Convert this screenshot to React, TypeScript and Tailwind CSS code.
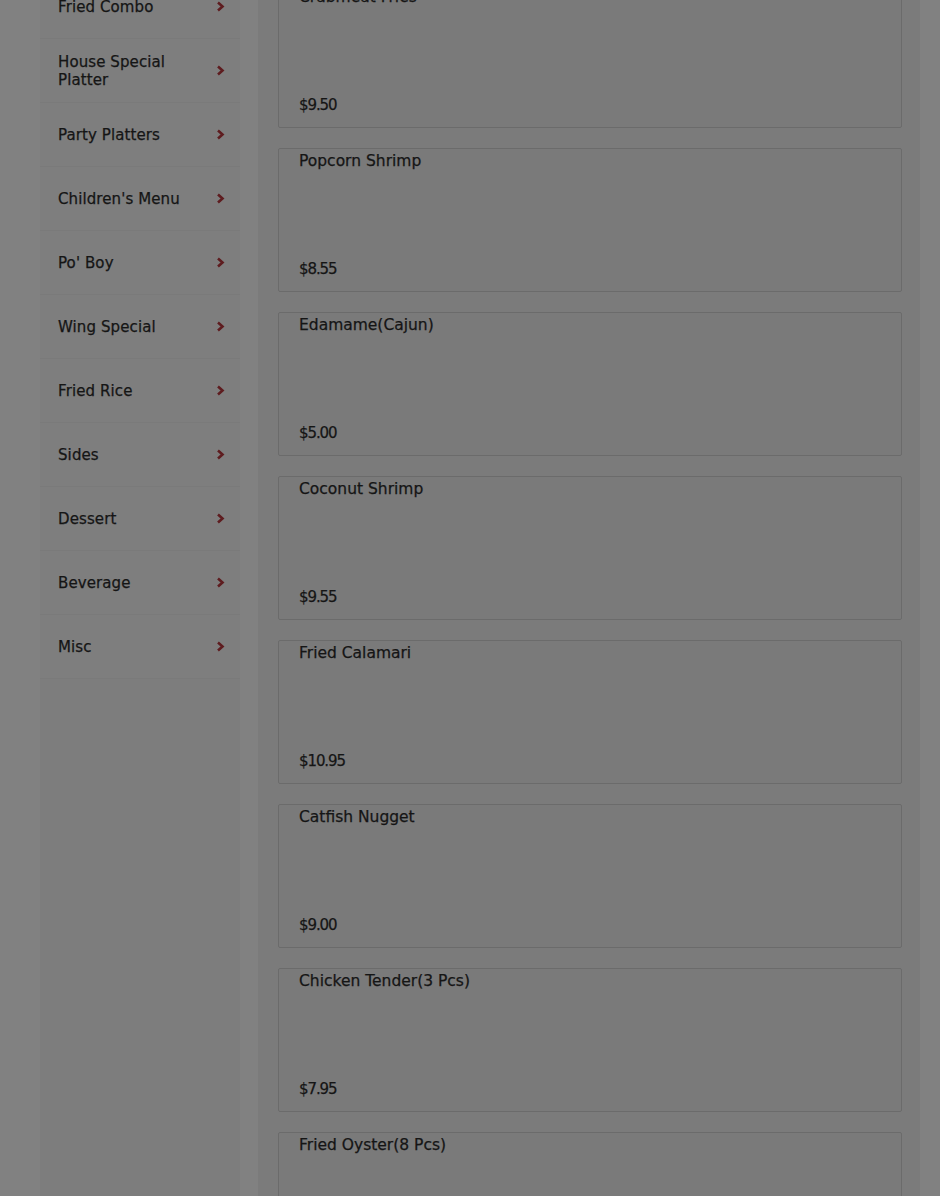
const categories = [
  "Fried Combo",
  "House Special Platter",
  "Party Platters",
  "Children's Menu",
  "Po' Boy",
  "Wing Special",
  "Fried Rice",
  "Sides",
  "Dessert",
  "Beverage",
  "Misc",
];

const items = [
  { name: "Crabmeat Fries", price: "$9.50" },
  { name: "Popcorn Shrimp", price: "$8.55" },
  { name: "Edamame(Cajun)", price: "$5.00" },
  { name: "Coconut Shrimp", price: "$9.55" },
  { name: "Fried Calamari", price: "$10.95" },
  { name: "Catfish Nugget", price: "$9.00" },
  { name: "Chicken Tender(3 Pcs)", price: "$7.95" },
  { name: "Fried Oyster(8 Pcs)", price: "$12.95" },
];

function Chevron() {
  return (
    <svg width="9" height="11" viewBox="0 0 9 11" className="shrink-0">
      <polyline
        points="2,1.5 6.5,5.5 2,9.5"
        fill="none"
        stroke="#5e1c1f"
        strokeWidth="2.6"
        strokeLinecap="butt"
        strokeLinejoin="miter"
      />
    </svg>
  );
}

export default function App() {
  return (
    <div
      className="flex h-[1196px] overflow-hidden bg-[#818181] pl-[40px] text-[#151515] [-webkit-text-stroke:0.25px_#151515]"
      style={{ fontFamily: '"DejaVu Sans", "Liberation Sans", sans-serif' }}
    >
      {/* category menu */}
      <aside className="w-[200px] shrink-0 bg-[#7d7d7d]">
        <ul className="-mt-[25px]">
          {categories.map((c) => (
            <li
              key={c}
              className="flex h-[64px] items-center justify-between border-b border-[#7a7a7a] bg-[#7e7e7e] pl-[18px] pr-[15px]"
            >
              <span className="w-[140px] text-[15px] leading-[18px] tracking-[0.1px]">{c}</span>
              <Chevron />
            </li>
          ))}
        </ul>
      </aside>

      {/* item list */}
      <main className="ml-[18px] w-[662px] shrink-0 bg-[#7b7b7b] pl-[20px] pr-[18px]">
        <div className="-mt-[16px] flex flex-col gap-[20px]">
          {items.map((it) => (
            <div
              key={it.name}
              className="flex h-[144px] flex-col justify-between rounded-[2px] border border-[#6b6b6b] bg-[#7a7a7a] px-[20px] pt-[2px] pb-[12px]"
            >
              <div className="text-[15.5px] leading-[20px]">{it.name}</div>
              <div className="text-[15px] leading-[20px] tracking-[-1.1px]">{it.price}</div>
            </div>
          ))}
        </div>
      </main>
    </div>
  );
}
